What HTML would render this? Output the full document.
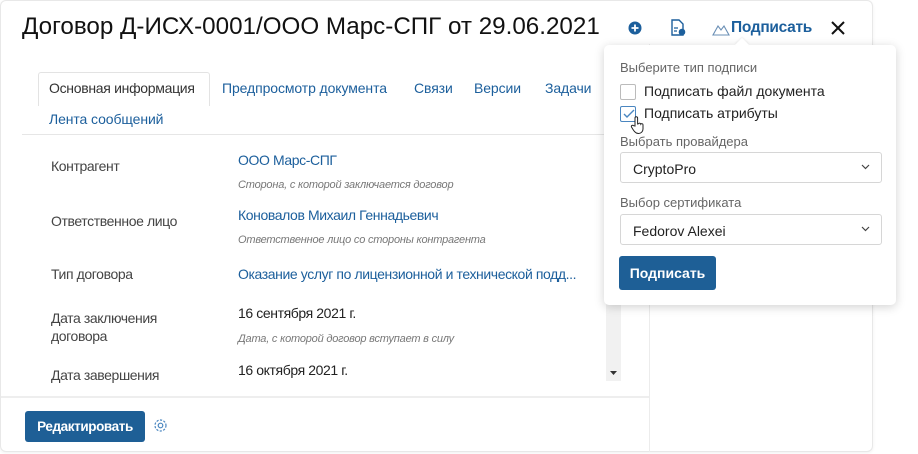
<!DOCTYPE html>
<html><head><meta charset="utf-8"><style>
*{box-sizing:border-box;margin:0;padding:0}
body{width:918px;height:454px;background:#fff;font-family:"Liberation Sans",sans-serif;position:relative;overflow:hidden;color:#333}
.a{position:absolute;white-space:nowrap}
.card{position:absolute;left:0;top:0;width:873px;height:452px;border:1px solid #e8e8e8;border-radius:6px;background:#fff;box-shadow:0 1px 3px rgba(0,0,0,.06)}
.lbl{font-size:14px;color:#444;letter-spacing:-.4px}
.val{font-size:14px;color:#1c5f9c;letter-spacing:-.4px}
.blk{font-size:14px;color:#222;letter-spacing:-.4px}
.hint{font-size:11px;color:#777;font-style:italic;letter-spacing:-.2px}
.tab{font-size:14px;color:#1c5f9c;letter-spacing:-.1px}
.pop{position:absolute;left:604px;top:45px;width:292px;height:260px;background:#fff;border-radius:5px;box-shadow:0 2px 10px rgba(0,0,0,.18)}
.pl{font-size:13px;color:#666}
.sel{position:absolute;left:16px;width:262px;height:31px;border:1px solid #d6d6d6;border-radius:3px;font-size:14px;color:#222;padding:8px 12px}
.cb{position:absolute;left:16px;width:16px;height:16px;border:1px solid #bbb;border-radius:2px;background:#fff}
</style></head><body>
<div class="card"></div>
<div class="a" style="left:22px;top:13px;font-size:24.2px;color:#111">Договор Д-ИСХ-0001/ООО Марс-СПГ от 29.06.2021</div>
<svg class="a" style="left:628px;top:21px" width="14" height="14"><circle cx="7" cy="7" r="6.5" fill="#1c5f9c"/><path d="M7 3.5v7M3.5 7h7" stroke="#fff" stroke-width="1.8"/></svg>
<svg class="a" style="left:670px;top:19px" width="16" height="18"><path d="M2 1h7l4 4v11H2z" fill="none" stroke="#1c5f9c" stroke-width="1.4"/><path d="M4 9h4M4 12h3" stroke="#1c5f9c" stroke-width="1.2"/><circle cx="12" cy="13" r="3.3" fill="#1c5f9c"/></svg>
<svg class="a" style="left:712px;top:22px" width="18" height="14"><path d="M1 13h16L12 4 9 8 6 4z" fill="none" stroke="#6a8fb5" stroke-width="1.1"/></svg>
<div class="a" style="left:731px;top:19px;font-size:15.5px;font-weight:bold;color:#1c5f9c;letter-spacing:-.3px">Подписать</div>
<svg class="a" style="left:830px;top:20px" width="16" height="16"><path d="M2 2l12 12M14 2L2 14" stroke="#111" stroke-width="2"/></svg>
<div class="a" style="left:38px;top:72px;width:172px;height:34px;border:1px solid #e3e3e3;border-bottom:none;border-radius:3px 3px 0 0;background:#fff"></div>
<div class="a tab" style="left:49px;top:80px;color:#333;letter-spacing:-.3px">Основная информация</div>
<div class="a tab" style="left:222px;top:80px">Предпросмотр документа</div>
<div class="a tab" style="left:414px;top:80px">Связи</div>
<div class="a tab" style="left:474px;top:80px">Версии</div>
<div class="a tab" style="left:545px;top:80px">Задачи</div>
<div class="a tab" style="left:49px;top:111px">Лента сообщений</div>
<div class="a" style="left:22px;top:134px;width:606px;height:1px;background:#e6e6e6"></div>
<div class="a lbl" style="left:51px;top:158px">Контрагент</div>
<div class="a val" style="left:238px;top:152px">ООО Марс-СПГ</div>
<div class="a hint" style="left:238px;top:179px">Сторона, с которой заключается договор</div>
<div class="a lbl" style="left:51px;top:213px">Ответственное лицо</div>
<div class="a val" style="left:238px;top:207px">Коновалов Михаил Геннадьевич</div>
<div class="a hint" style="left:238px;top:234px">Ответственное лицо со стороны контрагента</div>
<div class="a lbl" style="left:51px;top:266px">Тип договора</div>
<div class="a val" style="left:238px;top:266px">Оказание услуг по лицензионной и технической подд...</div>
<div class="a lbl" style="left:51px;top:309px;line-height:18px">Дата заключения<br>договора</div>
<div class="a blk" style="left:238px;top:305px">16 сентября 2021 г.</div>
<div class="a hint" style="left:238px;top:333px">Дата, с которой договор вступает в силу</div>
<div class="a lbl" style="left:51px;top:367px">Дата завершения</div>
<div class="a blk" style="left:238px;top:362px">16 октября 2021 г.</div>
<div class="a" style="left:606px;top:300px;width:15px;height:81px;background:#f1f1f1"></div>
<svg class="a" style="left:610px;top:370px" width="8" height="6"><path d="M0 1h7L3.5 5z" fill="#333"/></svg>
<div class="a" style="left:649px;top:44px;width:1px;height:408px;background:#ececec"></div>
<div class="a" style="left:1px;top:396px;width:648px;height:2px;background:#eee"></div>
<div class="a" style="left:25px;top:411px;width:120px;height:31px;background:#1e5f96;border-radius:3px;color:#fff;font-size:13.5px;font-weight:bold;text-align:center;line-height:31px;letter-spacing:-.4px">Редактировать</div>
<svg class="a" style="left:153px;top:418px" width="15" height="15"><circle cx="7.5" cy="7.5" r="2.3" fill="none" stroke="#4a86c0" stroke-width="1.2"/><circle cx="7.5" cy="7.5" r="5.5" fill="none" stroke="#4a86c0" stroke-width="1.2" stroke-dasharray="2.2 1.4"/></svg>
<div class="pop">
<div style="position:absolute;left:133px;top:-5px;width:10px;height:10px;background:#fff;transform:rotate(45deg);box-shadow:-1px -1px 2px rgba(0,0,0,.06)"></div>
<div class="a pl" style="left:16px;top:15px">Выберите тип подписи</div>
<div class="cb" style="top:39px"></div>
<div class="a" style="left:40px;top:38px;font-size:14px;color:#222">Подписать файл документа</div>
<div class="cb" style="top:61px;border-color:#4a86c0"></div>
<svg class="a" style="left:19px;top:64px" width="12" height="10"><path d="M1 5l3 3 7-7" fill="none" stroke="#4a86c0" stroke-width="1.4"/></svg>
<div class="a" style="left:40px;top:60px;font-size:14px;color:#222">Подписать атрибуты</div>
<svg class="a" style="left:26px;top:70px" width="16" height="20"><path d="M5 11V3a1.3 1.3 0 0 1 2.6 0v6l1-.3a1.2 1.2 0 0 1 2.2.5 1.2 1.2 0 0 1 2.2.6V14c0 2.5-2 4.5-4.5 4.5C6 18.5 4.5 17 3 14.5L1.5 12a1.2 1.2 0 0 1 2-1.3z" fill="#fff" stroke="#222" stroke-width="1"/></svg>
<div class="a pl" style="left:16px;top:89px">Выбрать провайдера</div>
<div class="sel" style="top:107px">CryptoPro</div>
<svg class="a" style="left:257px;top:119px" width="9" height="6"><path d="M1 1l3.5 3.5L8 1" fill="none" stroke="#444" stroke-width="1.2"/></svg>
<div class="a pl" style="left:16px;top:150px">Выбор сертификата</div>
<div class="sel" style="top:169px">Fedorov Alexei</div>
<svg class="a" style="left:257px;top:181px" width="9" height="6"><path d="M1 1l3.5 3.5L8 1" fill="none" stroke="#444" stroke-width="1.2"/></svg>
<div class="a" style="left:15px;top:211px;width:97px;height:34px;background:#1e5f96;border-radius:3px;color:#fff;font-size:14px;font-weight:bold;text-align:center;line-height:34px">Подписать</div>
</div>
</body></html>
